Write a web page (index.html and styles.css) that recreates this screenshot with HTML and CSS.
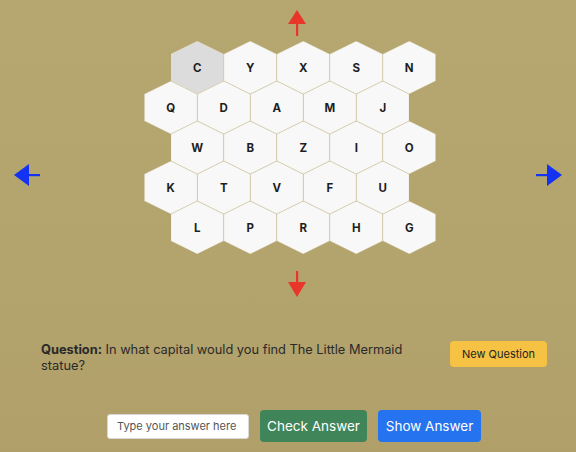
FILE: index.html
```html
<!DOCTYPE html>
<html lang="en">
<head>
<meta charset="utf-8">
<title>Hex Quiz</title>
<link rel="stylesheet" href="styles.css">
</head>
<body>
<main class="page">
  <section class="board">
    <button class="arrow arrow-side" aria-label="Left">
      <svg width="26" height="22" viewBox="0 0 26 22"><polygon points="0,11 15,0 15,22" fill="#1432f2"/><rect x="15" y="10" width="11" height="2.2" fill="#1432f2"/></svg>
    </button>
    <div class="center">
      <button class="arrow arrow-vert" aria-label="Up">
        <svg width="20" height="27" viewBox="0 0 20 27"><polygon points="10,0 19,14 1,14" fill="#e8362b"/><rect x="9" y="14" width="2.2" height="12" fill="#e8362b"/></svg>
      </button>
      <div class="hexgrid">
        <div class="hexrow shift">
          <div class="hex selected"><span>C</span></div>
          <div class="hex"><span>Y</span></div>
          <div class="hex"><span>X</span></div>
          <div class="hex"><span>S</span></div>
          <div class="hex"><span>N</span></div>
        </div>
        <div class="hexrow">
          <div class="hex"><span>Q</span></div>
          <div class="hex"><span>D</span></div>
          <div class="hex"><span>A</span></div>
          <div class="hex"><span>M</span></div>
          <div class="hex"><span>J</span></div>
        </div>
        <div class="hexrow shift">
          <div class="hex"><span>W</span></div>
          <div class="hex"><span>B</span></div>
          <div class="hex"><span>Z</span></div>
          <div class="hex"><span>I</span></div>
          <div class="hex"><span>O</span></div>
        </div>
        <div class="hexrow">
          <div class="hex"><span>K</span></div>
          <div class="hex"><span>T</span></div>
          <div class="hex"><span>V</span></div>
          <div class="hex"><span>F</span></div>
          <div class="hex"><span>U</span></div>
        </div>
        <div class="hexrow shift">
          <div class="hex"><span>L</span></div>
          <div class="hex"><span>P</span></div>
          <div class="hex"><span>R</span></div>
          <div class="hex"><span>H</span></div>
          <div class="hex"><span>G</span></div>
        </div>
      </div>
      <button class="arrow arrow-vert arrow-down" aria-label="Down">
        <svg width="20" height="27" viewBox="0 0 20 27"><rect x="9" y="0" width="2.2" height="11" fill="#e8362b"/><polygon points="1,11 19,11 10,26" fill="#e8362b"/></svg>
      </button>
    </div>
    <button class="arrow arrow-side" aria-label="Right">
      <svg width="26" height="22" viewBox="0 0 26 22"><rect x="0" y="10" width="11" height="2.2" fill="#1432f2"/><polygon points="11,0 26,11 11,22" fill="#1432f2"/></svg>
    </button>
  </section>

  <section class="question">
    <p class="question-text"><strong>Question:</strong> In what capital would you find The Little Mermaid statue?</p>
    <button class="btn btn-new">New Question</button>
  </section>

  <form class="answer" onsubmit="return false">
    <input class="answer-input" type="text" placeholder="Type your answer here">
    <button class="btn btn-check" type="button">Check Answer</button>
    <button class="btn btn-show" type="button">Show Answer</button>
  </form>
</main>
</body>
</html>
```

FILE: styles.css
```css
* { box-sizing: border-box; }

html, body {
  margin: 0;
  padding: 0;
}

body {
  width: 576px;
  height: 452px;
  overflow: hidden;
  background: linear-gradient(180deg, #b5a76f 0%, #b3a46d 60%, #b19f6a 100%);
  font-family: Inter, "Noto Sans", sans-serif;
  color: #2a2a2a;
}

.page {
  display: flex;
  flex-direction: column;
}

.board {
  display: flex;
  justify-content: space-between;
  align-items: flex-start;
  padding: 10px 14px 0 14px;
}

.arrow {
  border: 0;
  background: none;
  padding: 0;
  margin: 0;
  display: block;
  cursor: pointer;
  line-height: 0;
}

.arrow svg { display: block; }

.arrow-side {
  margin-top: 154px;
}

.center {
  display: flex;
  flex-direction: column;
  align-items: center;
  margin-left: 4px;
}

.arrow-vert {
  margin-left: 14px;
}

.hexgrid {
  margin-top: 4px;
  width: 291.5px;
  display: flex;
  flex-direction: column;
}

.arrow-down {
  margin-top: 17px;
}

.hexrow {
  display: flex;
  margin-top: -13px;
}

.hexrow:first-child { margin-top: 0; }

.hexrow.shift { margin-left: 26.5px; }

.hex {
  position: relative;
  width: 53px;
  height: 53px;
  flex: 0 0 53px;
  background: #e2dcc8;
  clip-path: polygon(50% 0, 100% 13px, 100% 40px, 50% 100%, 0 40px, 0 13px);
}

.hex span {
  position: absolute;
  inset: 0.5px;
  display: flex;
  align-items: center;
  justify-content: center;
  background: #f8f8f8;
  clip-path: polygon(50% 0, 100% 25%, 100% 75%, 50% 100%, 0 75%, 0 25%);
  font-size: 11.5px;
  font-weight: 700;
  color: #1e1e1e;
}

.hex.selected span { background: #dcdcdc; }

.question {
  display: flex;
  justify-content: space-between;
  align-items: flex-start;
  margin-top: 43px;
  padding: 0 29px 0 41px;
}

.question-text {
  margin: 0;
  padding-top: 1px;
  width: 372px;
  font-size: 12.8px;
  line-height: 16px;
  color: #2a2a2a;
}

.question-text strong { font-weight: 700; }

.btn {
  border: 0;
  border-radius: 4px;
  font-family: inherit;
  cursor: pointer;
}

.btn-new {
  width: 97px;
  height: 26px;
  background: #f5c243;
  color: #222;
  font-size: 11px;
  padding: 0;
}

.answer {
  display: flex;
  justify-content: center;
  align-items: center;
  gap: 11px;
  margin: 36px 0 0 0;
  padding-left: 12px;
}

.answer-input {
  width: 142px;
  height: 25px;
  border: 1px solid #d8d8d8;
  border-radius: 3px;
  background: #fff;
  padding: 0 9px;
  font-family: inherit;
  font-size: 11px;
  color: #333;
}

.answer-input::placeholder { color: #555; }

.btn-check, .btn-show {
  height: 32px;
  color: #fff;
  font-size: 13.5px;
  padding: 0;
}

.btn-check {
  width: 107px;
  background: #3f8559;
}

.btn-show {
  width: 103px;
  background: #2573ef;
}
```
